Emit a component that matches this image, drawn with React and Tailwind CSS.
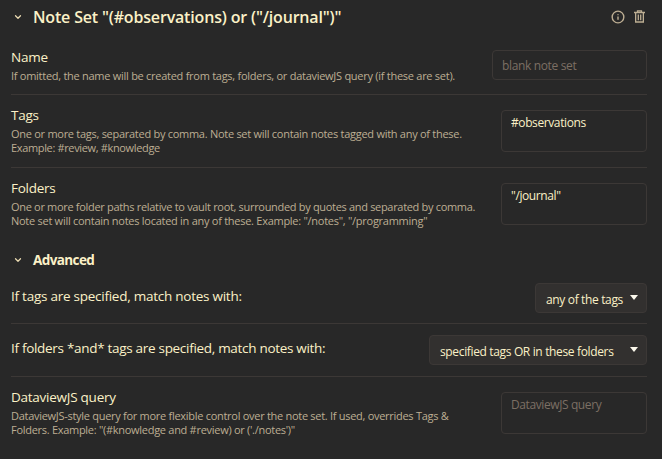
import { ChevronDown, Info } from "lucide-react";

function Row({ className, name, children, control }) {
  return (
    <div className={`flex items-start justify-between ${className}`}>
      <div className="w-0 pt-[10px] whitespace-nowrap">
        <div className="text-[13.5px] leading-[20px] tracking-[-0.25px]">{name}</div>
        <div className="pt-[2px] text-[11px] leading-[14px] text-[#bdae93]">{children}</div>
      </div>
      {control}
    </div>
  );
}

function Trash() {
  return (
    <svg className="mr-[2px] h-[13px] w-[11px]" viewBox="0 0 11 13" fill="none" stroke="#bdae93" strokeWidth="1.3">
      <path d="M0 2.5h11M3.5 2.2V0.9h4v1.3M1.65 2.7v9.3h7.7V2.7M4.3 4.4v5.9M6.7 4.4v5.9" />
    </svg>
  );
}

function Select({ className, children }) {
  return (
    <div className={`flex h-[30px] items-center justify-between rounded border border-[#3c3836] bg-[#32302f] pr-[8px] pl-[10px] text-[12px] tracking-[-0.35px] whitespace-nowrap ${className}`}>
      <span className="pt-[3px]">{children}</span>
      <svg className="mb-[1px] h-[5px] w-[8px]" viewBox="0 0 8 5" fill="#fbf8ec">
        <path d="M0 0h8L4 5z" />
      </svg>
    </div>
  );
}

const area = "h-[42px] w-[146px] shrink-0 rounded border border-[#3c3836] px-[9px] pt-[3px] text-[12px] leading-[17px] tracking-[-0.4px] whitespace-nowrap";

export default function App() {
  return (
    <div className="h-[459px] w-[662px] overflow-hidden bg-[#282828] pr-[15px] pl-[11px] font-['Open_Sans','Noto_Sans',sans-serif] text-[#fbf1c7]">
      <div className="flex h-[33px] items-center">
        <ChevronDown className="ml-[2px] size-[10px] text-[#ebdbb2]" strokeWidth={3} />
        <h2 className="ml-[10px] grow text-[16px] leading-[22px] font-semibold tracking-[-0.17px] whitespace-nowrap">
          Note Set "(#observations) or ("/journal")"
        </h2>
        <Info className="mr-[9px] size-[14px] text-[#bdae93]" strokeWidth={2.4} />
        <Trash />
      </div>
      <Row
        className="h-[61px] pt-[4px]"
        name="Name"
        control={
          <div className="mt-[13px] h-[30px] w-[155px] shrink-0 rounded border border-[#3c3836] px-[9px] text-[12px] leading-[30px] tracking-[-0.35px] text-[#7c6f64]">
            blank note set
          </div>
        }
      >
        <div className="tracking-[-0.27px]">If omitted, the name will be created from tags, folders, or dataviewJS query (if these are set).</div>
      </Row>
      <Row className="h-[73px] border-t border-[#3c3836]" name="Tags" control={<div className={`mt-[15px] ${area}`}>#observations</div>}>
        <div className="tracking-[-0.275px]">One or more tags, separated by comma. Note set will contain notes tagged with any of these.</div>
        <div className="tracking-[-0.35px]">Example: #review, #knowledge</div>
      </Row>
      <Row className="h-[73px] border-t border-[#3c3836]" name="Folders" control={<div className={`mt-[15px] ${area}`}>"/journal"</div>}>
        <div className="tracking-[-0.315px]">One or more folder paths relative to vault root, surrounded by quotes and separated by comma.</div>
        <div className="tracking-[-0.27px]">Note set will contain notes located in any of these. Example: "/notes", "/programming"</div>
      </Row>
      <div className="flex h-[40px] items-center">
        <ChevronDown className="ml-[2px] size-[10px] text-[#ebdbb2]" strokeWidth={3} />
        <h3 className="ml-[10px] text-[13.5px] leading-[20px] font-bold tracking-[-0.6px]">Advanced</h3>
      </div>
      <div className="flex h-[43px] items-start justify-between">
        <div className="mt-[6px] text-[13.5px] leading-[21px] tracking-[-0.25px]">If tags are specified, match notes with:</div>
        <Select className="mt-[3px] w-[112px]">any of the tags</Select>
      </div>
      <div className="flex h-[53px] items-start justify-between border-t border-[#3c3836]">
        <div className="mt-[14px] text-[13.5px] leading-[21px] tracking-[-0.3px]">If folders *and* tags are specified, match notes with:</div>
        <Select className="mt-[11px] w-[218px]">specified tags OR in these folders</Select>
      </div>
      <Row className="border-t border-[#3c3836]" name="DataviewJS query" control={<div className={`mt-[15px] ${area} text-[#7c6f64]`}>DataviewJS query</div>}>
        <div className="tracking-[-0.285px]">DataviewJS-style query for more flexible control over the note set. If used, overrides Tags &amp;</div>
        <div className="tracking-[-0.285px]">Folders. Example: "(#knowledge and #review) or ('./notes')"</div>
      </Row>
    </div>
  );
}
